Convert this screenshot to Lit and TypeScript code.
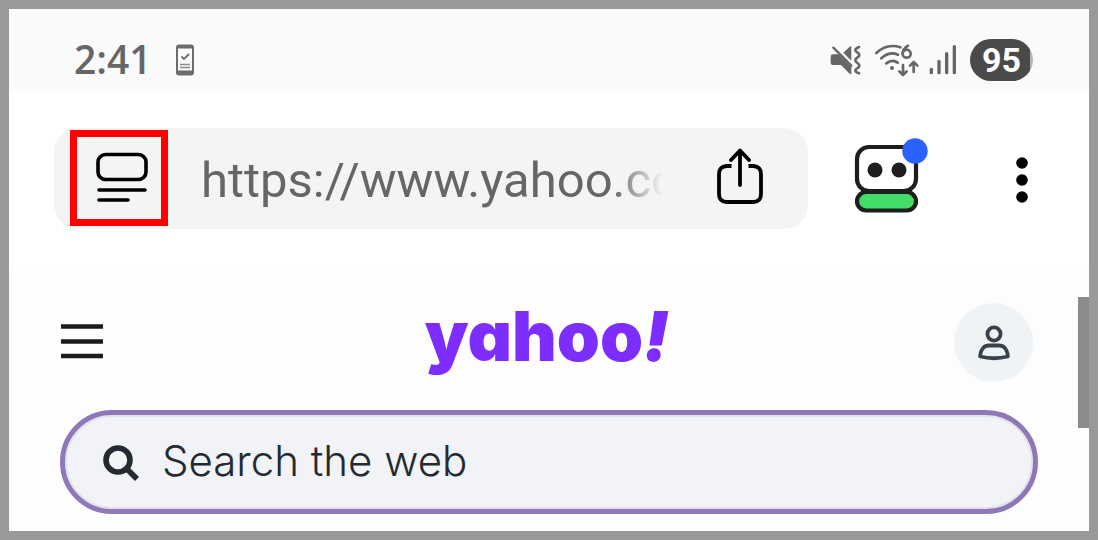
import { LitElement, html, css } from "lit";
import { customElement } from "lit/decorators.js";

@customElement("status-bar")
class StatusBar extends LitElement {
  static styles = css`
    :host {
      display: flex;
      align-items: center;
      box-sizing: border-box;
      height: 80px;
      padding: 22px 56px 0 65px;
      background: #fafafa;
      color: #666;
    }
    svg { display: block; flex: none; }
    .time {
      padding-bottom: 2px;
      font: 600 39px/44px "Open Sans", "Noto Sans", sans-serif;
      margin-right: 23px;
    }
    .tray {
      display: flex;
      align-items: center;
      gap: 13px;
      margin-left: auto;
    }
    .network {
      display: flex;
      align-items: center;
      gap: 9px;
    }
    .battery {
      display: flex;
      align-items: center;
      justify-content: center;
      width: 63px;
      height: 42px;
      border-radius: 21px;
      background: linear-gradient(90deg, #4a4a4a 95%, #b4b4b4 95%);
      color: #fff;
      font: 700 34px/42px Roboto, sans-serif;
    }
  `;

  render() {
    return html`
      <time class="time">2:41</time>
      <svg width="20" height="32" viewBox="0 0 20 32" aria-hidden="true">
        <rect x="1" y="0.500" width="18" height="31" rx="3" fill="#6b6b6b" />
        <rect x="3" y="4.500" width="14" height="22" fill="#fafafa" />
        <path d="M6.500 12.500l2.500 2.500 5-5" fill="none" stroke="#6b6b6b" stroke-width="1.800" />
        <path d="M5 20.500h10M5 23.500h10" stroke="#8a8a8a" stroke-width="1.500" />
      </svg>
      <div class="tray">
        <svg width="31" height="30" viewBox="91 74 93 90" role="img" aria-label="Muted, vibrating">
          <path d="M100 102h17l38 38v18q0 6-5 2l-26-26h-24q-7 0-7-7v-18q0-7 7-7z" fill="#666" />
          <path d="M131 97l19-18q5-4 5 2v40z" fill="#666" />
          <path d="M101 82l54 54" stroke="#666" stroke-width="7" stroke-linecap="round" />
          <path d="M178 80q-11 4-11 9c0 7 12 7 12 15s-12 8-12 16 12 8 12 16-12 8-12 14q0 6 11 9" fill="none" stroke="#666" stroke-width="8" stroke-linecap="round" />
        </svg>
        <div class="network">
          <svg width="46" height="34" viewBox="224 68 138 102" role="img" aria-label="Wi-Fi 6">
            <g fill="none" stroke="#666" stroke-width="8" stroke-linecap="round" stroke-linejoin="round">
              <path d="M231 98q32-30 72-17M246 114q24-22 50-11M261 129q18-14 34-2" />
              <path d="M326 76q-16 10-16 24" />
              <circle cx="322" cy="100" r="12" />
              <path d="M311 134v29M300 153l11 11 11-11M343 155v-29M332 136l11-11 11 11" />
            </g>
            <circle cx="278" cy="143" r="6" fill="#666" />
          </svg>
          <svg width="28" height="30" viewBox="386 74 84 90" role="img" aria-label="Signal strength">
            <path d="M393 147v10M416 123v34M439 100v57M462 79v78" stroke="#666" stroke-width="10" stroke-linecap="round" />
          </svg>
        </div>
        <span class="battery">95</span>
      </div>
    `;
  }
}

@customElement("browser-toolbar")
class BrowserToolbar extends LitElement {
  static styles = css`
    :host {
      display: flex;
      align-items: center;
      padding: 39px 61px 41px 45px;
      background: #fff;
    }
    svg { display: block; flex: none; }
    button {
      flex: none;
      margin: 0;
      padding: 0;
      border: 0;
      background: none;
      color: #000;
    }
    .address {
      display: flex;
      align-items: center;
      flex: 1;
      min-width: 0;
      box-sizing: border-box;
      height: 101px;
      padding: 0 45px 0 16px;
      border-radius: 24px;
      background: #f4f4f4;
    }
    .page-info {
      display: flex;
      align-items: center;
      justify-content: center;
      box-sizing: border-box;
      width: 98px;
      height: 96px;
      margin: 0 33px 2px 0;
      padding-left: 5px;
      border: 7px solid #f00;
    }
    .url {
      flex: 1;
      min-width: 0;
      height: 60px;
      margin: 0 55px 0 0;
      padding: 4px 0 0;
      border: 0;
      outline: 0;
      background: none;
      color: #666;
      font: 400 49px/60px Roboto, sans-serif;
      -webkit-mask-image: linear-gradient(90deg, #000 calc(100% - 50px), transparent);
      mask-image: linear-gradient(90deg, #000 calc(100% - 50px), transparent);
    }
    .share { padding-bottom: 1px; }
    .extension {
      margin: 0 87px 0 46px;
      padding-bottom: 6px;
    }
  `;

  render() {
    return html`
      <div class="address">
        <button class="page-info" aria-label="Page options">
          <svg width="54" height="52" viewBox="0 0 54 52" fill="none" stroke="currentColor" stroke-width="3.600" stroke-linecap="round">
            <rect x="3" y="2.500" width="48" height="25" rx="7.500" />
            <path d="M4 38h46M4 48h29" />
          </svg>
        </button>
        <input class="url" type="text" aria-label="Address" value="https://www.yahoo.com" />
        <button class="share" aria-label="Share">
          <svg width="46" height="60" viewBox="0 0 46 60" fill="none" stroke="currentColor" stroke-width="3.800" stroke-linejoin="round">
            <path d="M14.500 18H10q-8 0-8 8v20q0 8 8 8h26q8 0 8-8V26q0-8-8-8h-4.500" />
            <path d="M23 37V3M14 12l9-9.500 9 9.500" stroke-linecap="round" />
          </svg>
        </button>
      </div>
      <button class="extension" aria-label="RoboForm">
        <svg width="75" height="78" viewBox="0 0 75 78">
          <rect x="3" y="55" width="59" height="18.500" rx="9.200" fill="#43dc68" stroke="#1d1f1e" stroke-width="4.200" />
          <rect x="3" y="10" width="59" height="44" rx="12" fill="#fff" stroke="#1d1f1e" stroke-width="4.200" />
          <path d="M7 54.500h51" stroke="#1d1f1e" stroke-width="4" />
          <circle cx="21" cy="33" r="7.500" fill="#1d1f1e" />
          <circle cx="45" cy="33" r="7.500" fill="#1d1f1e" />
          <circle cx="61" cy="14" r="12.700" fill="#2962ff" />
        </svg>
      </button>
      <button aria-label="Menu">
        <svg width="12" height="48" viewBox="0 0 12 48" fill="currentColor">
          <circle cx="6" cy="8" r="5.800" />
          <circle cx="6" cy="25" r="5.800" />
          <circle cx="6" cy="42" r="5.800" />
        </svg>
      </button>
    `;
  }
}

@customElement("yahoo-page")
class YahooPage extends LitElement {
  static styles = css`
    :host {
      display: block;
      position: relative;
      padding: 33px 51px 17px;
      background: #fdfdfd;
    }
    svg { display: block; flex: none; }
    button {
      margin: 0;
      padding: 0;
      border: 0;
      background: none;
    }
    header {
      display: grid;
      grid-template-columns: 1fr auto 1fr;
      align-items: center;
      height: 79px;
      padding: 0 5px 0 1px;
    }
    .menu {
      justify-self: start;
      padding-bottom: 3px;
    }
    .logo {
      padding-bottom: 12px;
      color: #7d2eff;
      font: 900 69px/67px Inter, sans-serif;
      font-feature-settings: "cv11";
      text-decoration: none;
    }
    .bang { font-style: italic; }
    .profile {
      display: grid;
      place-items: center;
      justify-self: end;
      width: 79px;
      height: 79px;
      border-radius: 50%;
      background: #eff3f6;
    }
    .search {
      display: flex;
      align-items: center;
      gap: 22px;
      box-sizing: border-box;
      height: 104px;
      margin-top: 28px;
      padding: 0 40px 0 37px;
      border: 5px solid #8f78b8;
      border-radius: 52px;
      background: #f1f3f6;
      box-shadow: inset 0 0 0 2px #e1e4e9;
    }
    .query {
      flex: 1;
      min-width: 0;
      height: 60px;
      padding: 0 0 3px;
      border: 0;
      outline: 0;
      background: none;
      color: #232a31;
      font: 300 42px/56px Inter, sans-serif;
    }
    .query::placeholder { color: #232a31; opacity: 1; }
    .thumb {
      position: absolute;
      top: 27px;
      right: 0;
      width: 11px;
      height: 131px;
      background: #8b8b8b;
    }
  `;

  render() {
    return html`
      <header>
        <button class="menu" aria-label="Open menu">
          <svg width="42" height="36" viewBox="0 0 42 36" stroke="#1b1b1b" stroke-width="4.400">
            <path d="M0 3.500h42M0 18.500h42M0 33h42" />
          </svg>
        </button>
        <a class="logo" href="#">yahoo<span class="bang">!</span></a>
        <button class="profile" aria-label="Profile">
          <svg width="34" height="38" viewBox="0 0 34 38" fill="none" stroke="#39424a" stroke-width="3.800" stroke-linejoin="round">
            <circle cx="17" cy="10" r="6.600" />
            <path d="M3.200 32.500C3.500 25 7.500 21.500 12 21.500h10c4.500 0 8.500 3.500 8.800 11Q17 36 3.200 32.500z" />
          </svg>
        </button>
      </header>
      <form class="search" role="search">
        <svg width="38" height="38" viewBox="0 0 38 38" fill="none" stroke="#232a31" stroke-width="5.600">
          <circle cx="16" cy="17" r="12" />
          <path d="M24 25l11 11" />
        </svg>
        <input class="query" type="search" aria-label="Search the web" placeholder="Search the web" />
      </form>
      <div class="thumb"></div>
    `;
  }
}

@customElement("app-root")
class AppRoot extends LitElement {
  static styles = css`
    :host {
      display: block;
      box-sizing: border-box;
      min-height: 100vh;
      border: 9px solid #999;
      background: #fdfdfd;
    }
  `;

  render() {
    return html`
      <status-bar></status-bar>
      <browser-toolbar></browser-toolbar>
      <yahoo-page></yahoo-page>
    `;
  }
}
